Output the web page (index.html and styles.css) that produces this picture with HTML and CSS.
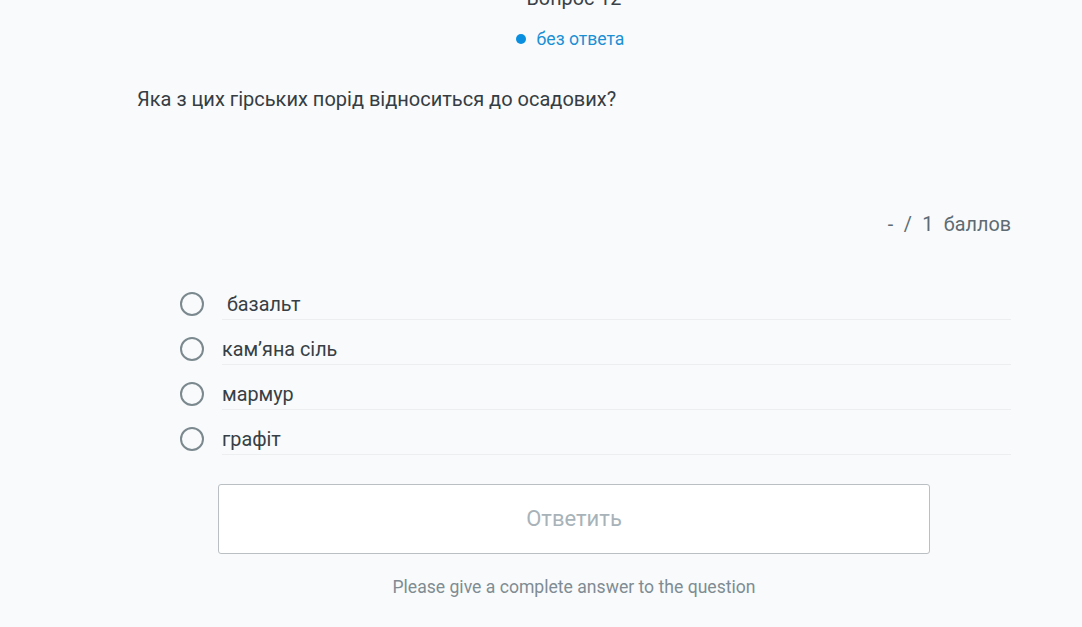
FILE: index.html
```html
<!DOCTYPE html>
<html lang="uk">

<head>
    <meta charset="UTF-8">
    <meta name="viewport" content="width=device-width, initial-scale=1.0">
    <title>Вопрос 12</title>

    <link rel="stylesheet" href="styles.css">

</head>

<body>

    <div class="container">

        <div class="header">
            <div class="titulo">Вопрос 12</div>
            <div class="estado"><span class="ponto"></span>без ответа</div>
        </div>

        <div class="pergunta">Яка з цих гірських порід відноситься до осадових?</div>

        <div class="pontos">- / 1 баллов</div>

        <div class="opcoes">
            <label class="opcao">
                <span class="radio"></span>
                <span class="texto">&nbsp;базальт</span>
            </label>
            <label class="opcao">
                <span class="radio"></span>
                <span class="texto">кам’яна сіль</span>
            </label>
            <label class="opcao">
                <span class="radio"></span>
                <span class="texto">мармур</span>
            </label>
            <label class="opcao">
                <span class="radio"></span>
                <span class="texto">графіт</span>
            </label>
        </div>

        <div class="botao">Ответить</div>

        <div class="aviso">Please give a complete answer to the question</div>

    </div>

</body>

</html>
```

FILE: styles.css
```css
body {
    margin: 0;
    font-family: Roboto, 'Liberation Sans', sans-serif;
    background-color: #f8fafb;
    color: #353d43;
}

.container {
    padding: 0 71px 0 137px;
}

.header {
    text-align: center;
    margin-top: -13px;
}

.titulo {
    font-size: 19.8px;
    line-height: 24px;
    color: #3a4147;
}

.estado {
    margin-top: 18px;
    padding-right: 8px;
    font-size: 17.6px;
    line-height: 20px;
    color: #1a8fd4;
    display: flex;
    justify-content: center;
    align-items: center;
}

.ponto {
    width: 10px;
    height: 10px;
    border-radius: 50%;
    background-color: #0a8ee0;
    margin-right: 11px;
}

.pergunta {
    margin-top: 38px;
    font-size: 20px;
    line-height: 24px;
    color: #353d43;
}

.pontos {
    margin-top: 102px;
    font-size: 19.8px;
    line-height: 24px;
    text-align: right;
    color: #5e6b73;
    word-spacing: 5.5px;
}

.opcoes {
    margin-top: 38px;
    padding-left: 43px;
}

.opcao {
    display: flex;
    align-items: flex-start;
    cursor: pointer;
}

.radio {
    flex: none;
    width: 20px;
    height: 20px;
    border: 2px solid #7b898f;
    border-radius: 50%;
    margin-top: 17px;
    margin-right: 18px;
}

.texto {
    flex: 1;
    padding: 18px 0 2px;
    font-size: 19.8px;
    line-height: 24px;
    color: #373f45;
    border-bottom: 1px solid #eceef0;
}

.botao {
    width: 710px;
    height: 68px;
    margin: 29px auto 0;
    border: 1px solid #b9bfc3;
    border-radius: 3px;
    background-color: #ffffff;
    color: #a8b3b9;
    font-size: 22px;
    line-height: 68px;
    text-align: center;
}

.aviso {
    margin-top: 23px;
    font-size: 17.6px;
    line-height: 20px;
    text-align: center;
    color: #7f8c93;
}
```
